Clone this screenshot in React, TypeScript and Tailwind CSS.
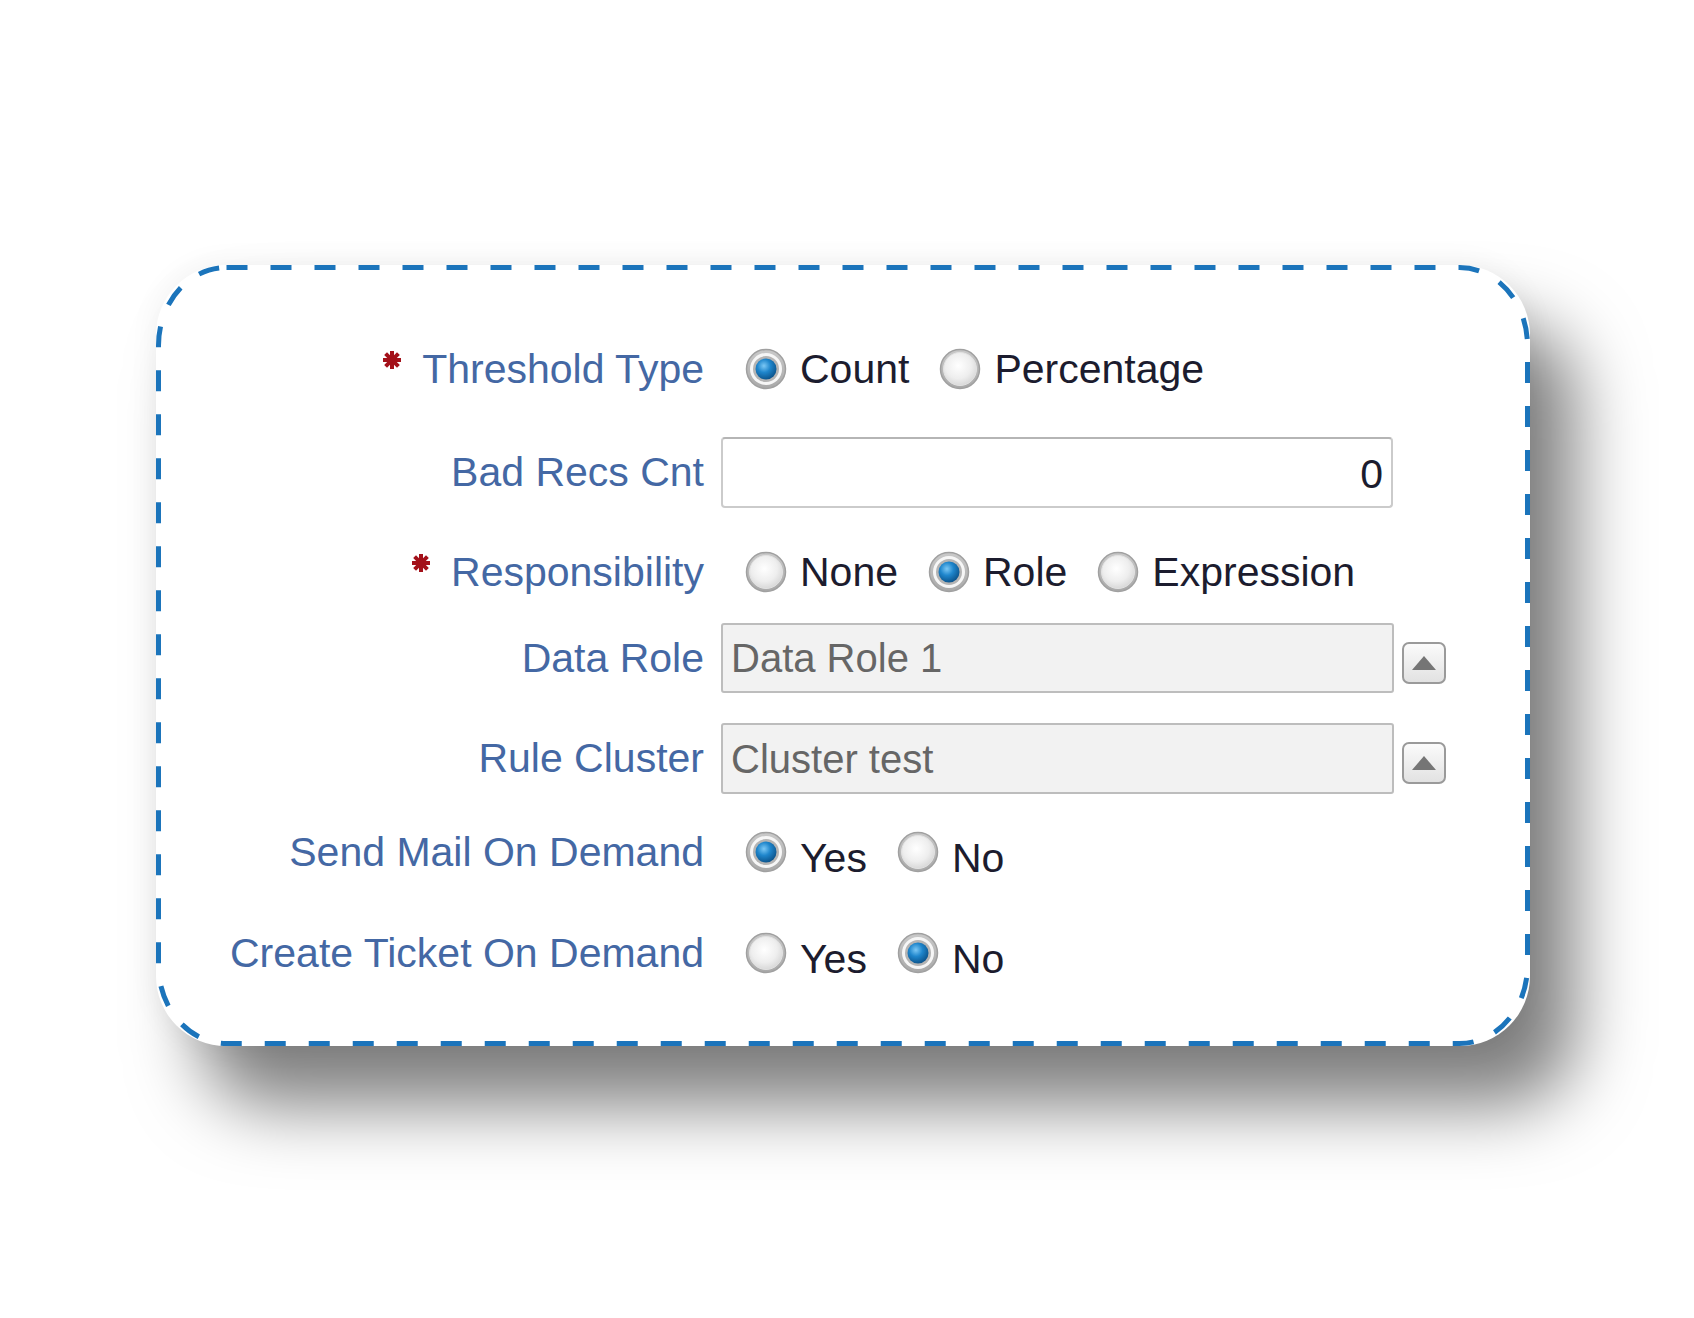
import React from "react"

const labelCls = "text-[41px] leading-none text-[#4468a4] whitespace-nowrap"
const valueCls = "text-[41px] leading-none text-[#1c1c2e] whitespace-nowrap"

function Asterisk() {
  return (
    <svg width="20" height="20" viewBox="0 0 20 20" className="mb-[18px] mr-[20px] shrink-0">
      <g stroke="#a3111a" strokeWidth="4" strokeLinecap="butt">
        <line x1="10" y1="1" x2="10" y2="19" />
        <line x1="1" y1="10" x2="19" y2="10" />
        <line x1="3.6" y1="3.6" x2="16.4" y2="16.4" />
        <line x1="16.4" y1="3.6" x2="3.6" y2="16.4" />
      </g>
    </svg>
  )
}

function Radio({ checked }: { checked: boolean }) {
  return (
    <svg width="42" height="42" viewBox="0 0 42 42" className="shrink-0">
      <defs>
        <radialGradient id="rOff" cx="0.45" cy="0.4" r="0.65">
          <stop offset="0" stopColor="#ffffff" />
          <stop offset="0.6" stopColor="#eeeeee" />
          <stop offset="1" stopColor="#d4d4d4" />
        </radialGradient>
        <radialGradient id="rBlue" cx="0.4" cy="0.35" r="0.7">
          <stop offset="0" stopColor="#7cc8f5" />
          <stop offset="0.45" stopColor="#1f86cc" />
          <stop offset="1" stopColor="#0a4f86" />
        </radialGradient>
        <linearGradient id="rRing" x1="0" y1="0" x2="0" y2="1">
          <stop offset="0" stopColor="#c9c9c9" />
          <stop offset="1" stopColor="#a9a9a9" />
        </linearGradient>
      </defs>
      <circle cx="21" cy="21" r="19.5" fill="url(#rRing)" stroke="#a0a0a0" strokeWidth="1.5" />
      {checked ? (
        <>
          <circle cx="21" cy="21" r="16" fill="#f6f6f6" />
          <circle cx="21" cy="21" r="13" fill="#b4b4b4" />
          <circle cx="21" cy="21" r="10.5" fill="url(#rBlue)" />
        </>
      ) : (
        <circle cx="21" cy="21" r="16.5" fill="url(#rOff)" stroke="#e2e2e2" strokeWidth="1" />
      )}
    </svg>
  )
}

function RadioGroup({
  options,
  value,
  low,
}: {
  options: string[]
  value: string
  low?: boolean
}) {
  return (
    <div className="ml-[24px] flex items-center gap-[30px]">
      {options.map((o) => (
        <div key={o} className="flex items-center gap-[13px]">
          <Radio checked={o === value} />
          <span className={low ? valueCls + " pt-[12px]" : valueCls}>{o}</span>
        </div>
      ))}
    </div>
  )
}

function Label({ text, required }: { text: string; required?: boolean }) {
  return (
    <div className="w-[548px] shrink-0 flex items-center justify-end">
      {required && <Asterisk />}
      <span className={labelCls}>{text}</span>
    </div>
  )
}

function LovButton() {
  return (
    <div className="ml-[8px] mt-[9px] w-[44px] h-[42px] rounded-[7px] border-2 border-[#9a9a9a] bg-gradient-to-b from-[#fbfbfb] to-[#e2e2e2] flex items-center justify-center">
      <svg width="26" height="16" viewBox="0 0 26 16">
        <polygon points="13,1 25,15 1,15" fill="#757575" />
      </svg>
    </div>
  )
}

export default function App() {
  return (
    <div
      className="w-[1694px] h-[1318px] bg-white pl-[156px] pt-[265px]"
      style={{ fontFamily: '"Liberation Sans", Arial, sans-serif' }}
    >
      <div className="relative w-[1374px] h-[781px] rounded-[70px] bg-white shadow-[45px_60px_70px_rgba(0,0,0,0.5),0_0_30px_rgba(0,0,0,0.06)] pt-[74px]">
        {/* dashed outline */}
        <svg
          className="absolute inset-0 pointer-events-none"
          width="1374"
          height="781"
          viewBox="0 0 1374 781"
        >
          <rect
            x="2.5"
            y="2.5"
            width="1369"
            height="776"
            rx="68"
            ry="78"
            fill="none"
            stroke="#1b74bb"
            strokeWidth="5"
            strokeDasharray="21 23"
          />
        </svg>

        {/* Threshold Type */}
        <div className="flex items-center h-[60px]">
          <Label text="Threshold Type" required />
          <div className="ml-[17px]">
            <RadioGroup options={["Count", "Percentage"]} value="Count" />
          </div>
        </div>

        {/* Bad Recs Cnt */}
        <div className="flex items-center h-[71px] mt-[38px]">
          <Label text="Bad Recs Cnt" />
          <div className="ml-[17px] w-[672px] h-[71px] rounded-[4px] border-2 border-[#cbcbcb] border-t-[#b5b5b5] bg-white flex items-center justify-end pr-[8px] pt-[4px]">
            <span className={valueCls}>0</span>
          </div>
        </div>

        {/* Responsibility */}
        <div className="flex items-center h-[60px] mt-[34px]">
          <Label text="Responsibility" required />
          <div className="ml-[17px]">
            <RadioGroup options={["None", "Role", "Expression"]} value="Role" />
          </div>
        </div>

        {/* Data Role */}
        <div className="flex items-center h-[70px] mt-[21px]">
          <Label text="Data Role" />
          <div className="ml-[17px] w-[673px] h-[70px] rounded-[3px] border-2 border-[#bdbdbd] bg-[#f2f2f2] flex items-center pl-[8px]">
            <span className="text-[40px] leading-none text-[#666666]">Data Role 1</span>
          </div>
          <LovButton />
        </div>

        {/* Rule Cluster */}
        <div className="flex items-center h-[71px] mt-[30px]">
          <Label text="Rule Cluster" />
          <div className="ml-[17px] w-[673px] h-[71px] rounded-[3px] border-2 border-[#bdbdbd] bg-[#f2f2f2] flex items-center pl-[8px]">
            <span className="text-[40px] leading-none text-[#666666]">Cluster test</span>
          </div>
          <LovButton />
        </div>

        {/* Send Mail On Demand */}
        <div className="flex items-center h-[60px] mt-[28px]">
          <Label text="Send Mail On Demand" />
          <div className="ml-[17px]">
            <RadioGroup options={["Yes", "No"]} value="Yes" low />
          </div>
        </div>

        {/* Create Ticket On Demand */}
        <div className="flex items-center h-[60px] mt-[41px]">
          <Label text="Create Ticket On Demand" />
          <div className="ml-[17px]">
            <RadioGroup options={["Yes", "No"]} value="No" low />
          </div>
        </div>
      </div>
    </div>
  )
}
